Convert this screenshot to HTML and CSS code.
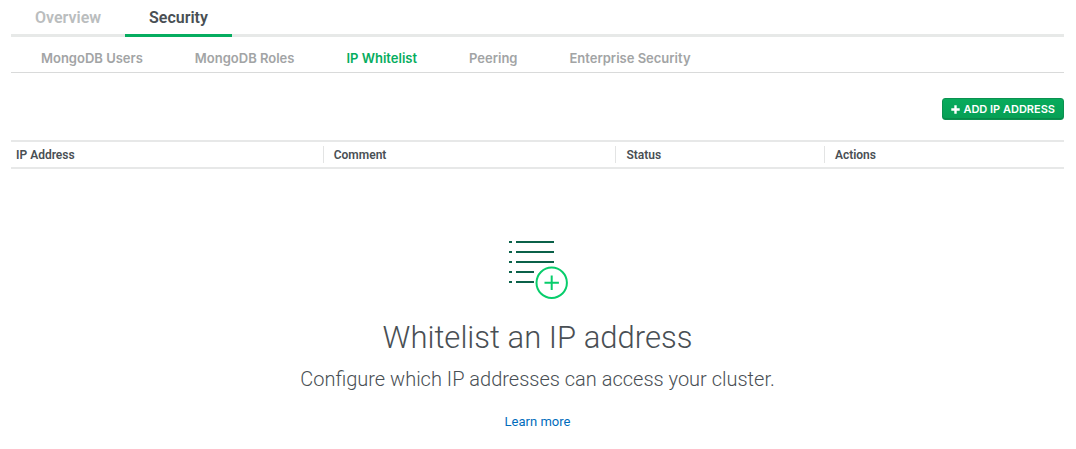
FILE: index.html
```html
<!DOCTYPE html>
<html lang="en">
<head>
<meta charset="utf-8">
<meta name="viewport" content="width=device-width, initial-scale=1">
<title>IP Whitelist</title>
<link rel="stylesheet" href="styles.css">
</head>
<body>
<nav class="tabs" aria-label="Cluster">
  <a class="tab" href="#overview">Overview</a>
  <a class="tab tab-active" href="#security" aria-current="page">Security</a>
</nav>
<nav class="subnav" aria-label="Security">
  <a class="subnav-link" href="#users">MongoDB Users</a>
  <a class="subnav-link" href="#roles">MongoDB Roles</a>
  <a class="subnav-link subnav-active" href="#whitelist" aria-current="page">IP Whitelist</a>
  <a class="subnav-link" href="#peering">Peering</a>
  <a class="subnav-link" href="#enterprise">Enterprise Security</a>
</nav>
<main>
  <div class="toolbar">
    <button class="button" type="button">
      <svg class="button-icon" viewBox="0 0 9 9" aria-hidden="true"><path d="M3.3 0.3h2.4v3h3v2.4h-3v3h-2.4v-3h-3v-2.4h3z" fill="#fff"/></svg>
      <span>ADD IP ADDRESS</span>
    </button>
  </div>
  <table class="list">
    <colgroup><col class="col-address"><col class="col-comment"><col class="col-status"><col></colgroup>
    <thead>
      <tr>
        <th scope="col"><span class="list-heading list-heading-first">IP Address</span></th>
        <th scope="col"><span class="list-heading">Comment</span></th>
        <th scope="col"><span class="list-heading">Status</span></th>
        <th scope="col"><span class="list-heading">Actions</span></th>
      </tr>
    </thead>
  </table>
  <section class="empty">
    <svg class="empty-icon" viewBox="0 0 60 60" aria-hidden="true">
      <path d="M1 3h3M8 3h38M1 13h3M8 13h38M1 23h3M8 23h38M1 33h3M8 33h18M1 43h3M8 43h18" stroke="#0b6149" stroke-width="2" fill="none"/>
      <circle cx="43.7" cy="43.7" r="15.2" fill="none" stroke="#07cd6b" stroke-width="2"/>
      <path d="M36.5 43.7h14.4M43.7 36.5v14.4" stroke="#07cd6b" stroke-width="2" fill="none"/>
    </svg>
    <h1 class="empty-title">Whitelist an IP address</h1>
    <p class="empty-text">Configure which IP addresses can access your cluster.</p>
    <a class="empty-link" href="#learn">Learn more</a>
  </section>
</main>
</body>
</html>
```
FILE: styles.css
```css
* { box-sizing: border-box; }

body {
  margin: 0 12px 0 11px;
  background: #fff;
  color: #494f54;
  font-family: Roboto, "Liberation Sans", sans-serif;
}

a { text-decoration: none; }

.tabs {
  display: flex;
  box-shadow: inset 0 -3px #e7e9e8;
}

.tab {
  padding: 8px 24px 6px;
  border-bottom: 3px solid transparent;
  color: #babdbe;
  font-size: 16px;
  font-weight: 600;
  line-height: 20px;
}

.tab-active {
  border-bottom-color: #06ad60;
  color: #494f54;
}

.subnav {
  display: flex;
  gap: 52px;
  padding: 11px 30px 4px;
  border-bottom: 1px solid #d9dada;
  font-family: Inter, Roboto, sans-serif;
}

.subnav-link {
  color: #a2a4a5;
  font-size: 13px;
  font-weight: 600;
  line-height: 20px;
}

.subnav-active { color: #06ad60; }

.toolbar {
  display: flex;
  justify-content: flex-end;
  padding: 25px 0 20px;
}

.button {
  display: flex;
  align-items: center;
  gap: 3px;
  padding: 0 8px;
  border: 1px solid #0b9150;
  border-radius: 3px;
  background: linear-gradient(#07ab5c, #069f55);
  box-shadow: inset 0 -1px #088a4a;
  color: #fff;
  font-family: Inter, Roboto, sans-serif;
  font-size: 11px;
  font-weight: 600;
  line-height: 20px;
}

.button-icon {
  width: 9px;
  height: 9px;
}

.list {
  width: 100%;
  border-collapse: separate;
  border-spacing: 0;
  table-layout: fixed;
  border-top: 2px solid #e7e8e8;
  border-bottom: 2px solid #e7e8e8;
}

.col-address { width: 29.6%; }
.col-comment { width: 27.8%; }
.col-status { width: 19.8%; }

.list th {
  padding: 4px 0;
  text-align: left;
}

.list-heading {
  display: block;
  padding: 1px 0 0 10px;
  border-left: 1px solid #e3e4e4;
  font-size: 12px;
  font-weight: 600;
  line-height: 16px;
}

.list-heading-first {
  padding-left: 5px;
  border-left: 0;
}

.empty {
  display: flex;
  flex-direction: column;
  align-items: center;
  padding: 70px 0 16px;
  text-align: center;
}

.empty-icon {
  width: 60px;
  height: 60px;
}

.empty-title {
  margin: 18px 0 0;
  font-size: 31px;
  font-weight: 300;
  line-height: 42px;
}

.empty-text {
  margin: 6px 0 0;
  font-size: 20px;
  font-weight: 300;
  line-height: 28px;
}

.empty-link {
  margin-top: 18px;
  color: #006cbc;
  font-size: 13px;
  line-height: 22px;
}
```
